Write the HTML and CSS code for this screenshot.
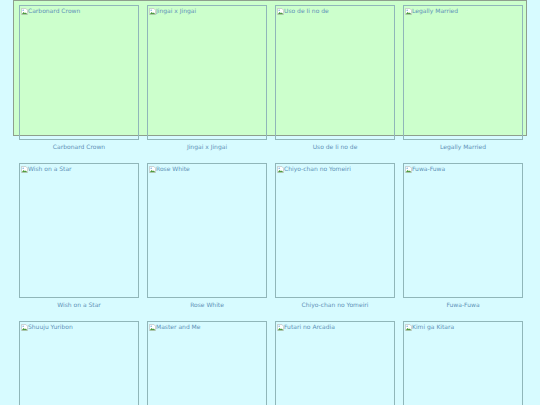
FILE: index.html
```html
<!DOCTYPE html>
<html>
<head>
<meta charset="utf-8">
<link rel="stylesheet" href="styles.css">
</head>
<body>
<div class="highlight"></div>
<div class="gallery">
  <div class="item"><div class="cover"><svg class="broken" viewBox="0 0 8 8"><path d="M0.5 0.5H5.5L7.5 2.5V7.5H0.5Z" fill="#fff" stroke="#aaa" stroke-width="0.6"/><path d="M0.8 7.2L3 4.5L4.5 6L5.5 5L7.2 7.2Z" fill="#4a9a3a"/><circle cx="2.5" cy="2.6" r="0.9" fill="#7ab0e0"/></svg><span class="alt">Carbonard Crown</span></div><div class="caption">Carbonard Crown</div></div>
  <div class="item"><div class="cover"><svg class="broken" viewBox="0 0 8 8"><path d="M0.5 0.5H5.5L7.5 2.5V7.5H0.5Z" fill="#fff" stroke="#aaa" stroke-width="0.6"/><path d="M0.8 7.2L3 4.5L4.5 6L5.5 5L7.2 7.2Z" fill="#4a9a3a"/><circle cx="2.5" cy="2.6" r="0.9" fill="#7ab0e0"/></svg><span class="alt">Jingai x Jingai</span></div><div class="caption">Jingai x Jingai</div></div>
  <div class="item"><div class="cover"><svg class="broken" viewBox="0 0 8 8"><path d="M0.5 0.5H5.5L7.5 2.5V7.5H0.5Z" fill="#fff" stroke="#aaa" stroke-width="0.6"/><path d="M0.8 7.2L3 4.5L4.5 6L5.5 5L7.2 7.2Z" fill="#4a9a3a"/><circle cx="2.5" cy="2.6" r="0.9" fill="#7ab0e0"/></svg><span class="alt">Uso de Ii no de</span></div><div class="caption">Uso de Ii no de</div></div>
  <div class="item"><div class="cover"><svg class="broken" viewBox="0 0 8 8"><path d="M0.5 0.5H5.5L7.5 2.5V7.5H0.5Z" fill="#fff" stroke="#aaa" stroke-width="0.6"/><path d="M0.8 7.2L3 4.5L4.5 6L5.5 5L7.2 7.2Z" fill="#4a9a3a"/><circle cx="2.5" cy="2.6" r="0.9" fill="#7ab0e0"/></svg><span class="alt">Legally Married</span></div><div class="caption">Legally Married</div></div>
  <div class="item"><div class="cover"><svg class="broken" viewBox="0 0 8 8"><path d="M0.5 0.5H5.5L7.5 2.5V7.5H0.5Z" fill="#fff" stroke="#aaa" stroke-width="0.6"/><path d="M0.8 7.2L3 4.5L4.5 6L5.5 5L7.2 7.2Z" fill="#4a9a3a"/><circle cx="2.5" cy="2.6" r="0.9" fill="#7ab0e0"/></svg><span class="alt">Wish on a Star</span></div><div class="caption">Wish on a Star</div></div>
  <div class="item"><div class="cover"><svg class="broken" viewBox="0 0 8 8"><path d="M0.5 0.5H5.5L7.5 2.5V7.5H0.5Z" fill="#fff" stroke="#aaa" stroke-width="0.6"/><path d="M0.8 7.2L3 4.5L4.5 6L5.5 5L7.2 7.2Z" fill="#4a9a3a"/><circle cx="2.5" cy="2.6" r="0.9" fill="#7ab0e0"/></svg><span class="alt">Rose White</span></div><div class="caption">Rose White</div></div>
  <div class="item"><div class="cover"><svg class="broken" viewBox="0 0 8 8"><path d="M0.5 0.5H5.5L7.5 2.5V7.5H0.5Z" fill="#fff" stroke="#aaa" stroke-width="0.6"/><path d="M0.8 7.2L3 4.5L4.5 6L5.5 5L7.2 7.2Z" fill="#4a9a3a"/><circle cx="2.5" cy="2.6" r="0.9" fill="#7ab0e0"/></svg><span class="alt">Chiyo-chan no Yomeiri</span></div><div class="caption">Chiyo-chan no Yomeiri</div></div>
  <div class="item"><div class="cover"><svg class="broken" viewBox="0 0 8 8"><path d="M0.5 0.5H5.5L7.5 2.5V7.5H0.5Z" fill="#fff" stroke="#aaa" stroke-width="0.6"/><path d="M0.8 7.2L3 4.5L4.5 6L5.5 5L7.2 7.2Z" fill="#4a9a3a"/><circle cx="2.5" cy="2.6" r="0.9" fill="#7ab0e0"/></svg><span class="alt">Fuwa-Fuwa</span></div><div class="caption">Fuwa-Fuwa</div></div>
  <div class="item"><div class="cover"><svg class="broken" viewBox="0 0 8 8"><path d="M0.5 0.5H5.5L7.5 2.5V7.5H0.5Z" fill="#fff" stroke="#aaa" stroke-width="0.6"/><path d="M0.8 7.2L3 4.5L4.5 6L5.5 5L7.2 7.2Z" fill="#4a9a3a"/><circle cx="2.5" cy="2.6" r="0.9" fill="#7ab0e0"/></svg><span class="alt">Shuuju Yuribon</span></div><div class="caption">Shuuju Yuribon</div></div>
  <div class="item"><div class="cover"><svg class="broken" viewBox="0 0 8 8"><path d="M0.5 0.5H5.5L7.5 2.5V7.5H0.5Z" fill="#fff" stroke="#aaa" stroke-width="0.6"/><path d="M0.8 7.2L3 4.5L4.5 6L5.5 5L7.2 7.2Z" fill="#4a9a3a"/><circle cx="2.5" cy="2.6" r="0.9" fill="#7ab0e0"/></svg><span class="alt">Master and Me</span></div><div class="caption">Master and Me</div></div>
  <div class="item"><div class="cover"><svg class="broken" viewBox="0 0 8 8"><path d="M0.5 0.5H5.5L7.5 2.5V7.5H0.5Z" fill="#fff" stroke="#aaa" stroke-width="0.6"/><path d="M0.8 7.2L3 4.5L4.5 6L5.5 5L7.2 7.2Z" fill="#4a9a3a"/><circle cx="2.5" cy="2.6" r="0.9" fill="#7ab0e0"/></svg><span class="alt">Futari no Arcadia</span></div><div class="caption">Futari no Arcadia</div></div>
  <div class="item"><div class="cover"><svg class="broken" viewBox="0 0 8 8"><path d="M0.5 0.5H5.5L7.5 2.5V7.5H0.5Z" fill="#fff" stroke="#aaa" stroke-width="0.6"/><path d="M0.8 7.2L3 4.5L4.5 6L5.5 5L7.2 7.2Z" fill="#4a9a3a"/><circle cx="2.5" cy="2.6" r="0.9" fill="#7ab0e0"/></svg><span class="alt">Kimi ga Kitara</span></div><div class="caption">Kimi ga Kitara</div></div>
</div>
</body>
</html>
```
FILE: styles.css
```css
html, body {
  margin: 0;
  padding: 0;
}
body {
  background: #d7fbff;
  font-family: "DejaVu Sans", Verdana, sans-serif;
  color: #5f92b8;
  position: relative;
}
.highlight {
  position: absolute;
  left: 13px;
  top: 0;
  width: 514px;
  height: 136px;
  box-sizing: border-box;
  background: #ccffcc;
  border: 1px solid #8e9f8e;
  z-index: 0;
}
.gallery {
  position: relative;
  z-index: 1;
  display: grid;
  grid-template-columns: repeat(4, 120px);
  column-gap: 8px;
  row-gap: 12px;
  padding: 5px 0 0 19px;
}
.item {
  display: flex;
  flex-direction: column;
}
.cover {
  box-sizing: border-box;
  width: 120px;
  height: 135px;
  border: 1px solid #90b6b9;
  display: flex;
  align-items: flex-start;
  padding: 1px 0 0 1px;
  font-size: 6px;
  line-height: 8px;
}
.broken {
  width: 7px;
  height: 7px;
  flex: none;
  margin-top: 0.5px;
}
.alt {
  white-space: nowrap;
}
.caption {
  font-size: 6px;
  line-height: 9px;
  padding-top: 2px;
  text-align: center;
}
```
